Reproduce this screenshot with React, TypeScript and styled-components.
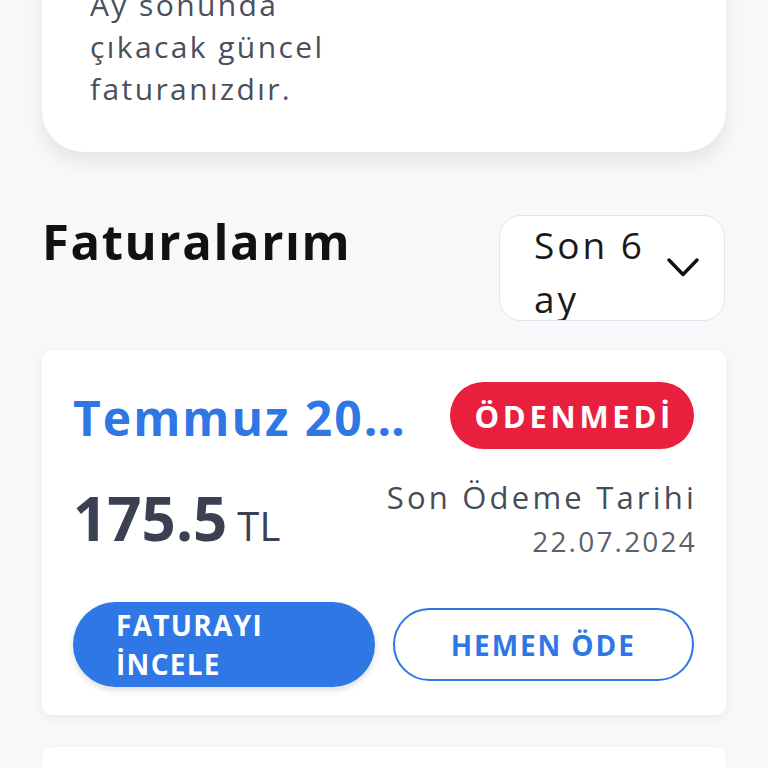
import React from "react";
import styled, { createGlobalStyle } from "styled-components";

const Global = createGlobalStyle`
  html, body { margin: 0; padding: 0; background: #f7f8fa; }
  body { font-family: "Open Sans", "Noto Sans", sans-serif; overflow: hidden; }
  * { box-sizing: border-box; }
`;

const Page = styled.div`
  width: 768px;
  height: 768px;
  overflow: hidden;
  padding: 0 42px;
  background: #f7f8fa;
`;

const InfoCard = styled.div`
  margin-top: -60px;
  background: #fff;
  border-radius: 0 0 42px 42px;
  box-shadow: 0 10px 18px rgba(0, 0, 0, 0.08);
  padding: 44px 48px 42px 48px;
`;

const InfoText = styled.p`
  margin: 0;
  width: 255px;
  font-size: 30px;
  line-height: 42px;
  color: #4a4f5c;
  letter-spacing: 2.4px;
`;

const HeaderRow = styled.div`
  margin-top: 63px;
  display: flex;
  justify-content: space-between;
  align-items: flex-start;
`;

const Title = styled.h1`
  margin: 0;
  font-size: 49px;
  line-height: 52px;
  font-weight: 700;
  color: #111;
  letter-spacing: 1.6px;
`;

const Select = styled.div`
  width: 226px;
  height: 106px;
  border: 1.5px solid #e1e3e8;
  border-radius: 22px;
  background: #fff;
  display: flex;
  align-items: flex-start;
  justify-content: space-between;
  padding: 2px 25px 0 34px;
  overflow: hidden;
  margin-right: 1px;
`;

const SelectText = styled.span`
  width: 122px;
  font-size: 37px;
  line-height: 54px;
  color: #1a1a1a;
  letter-spacing: 3px;
`;

const Chevron = styled.svg`
  margin-top: 40px;
`;

const BillCard = styled.div`
  margin-top: 29px;
  background: #fff;
  border-radius: 10px;
  box-shadow: 0 3px 10px rgba(0, 0, 0, 0.06);
  padding: 31px 32px 28px 31px;
  display: flex;
  flex-direction: column;
`;

const TitleRow = styled.div`
  display: flex;
  align-items: center;
  justify-content: space-between;
`;

const Month = styled.div`
  width: 348px;
  padding-top: 4px;
  font-size: 48px;
  font-weight: 700;
  color: #2f77e4;
  white-space: nowrap;
  overflow: hidden;
  text-overflow: ellipsis;
  letter-spacing: 2px;
`;

const Badge = styled.div`
  height: 67px;
  padding: 0 20px 0 24px;
  border-radius: 34px;
  background: #e8203d;
  color: #fff;
  font-size: 31px;
  font-weight: 700;
  letter-spacing: 3.7px;
  display: flex;
  align-items: center;
`;

const AmountRow = styled.div`
  margin-top: 24px;
  display: flex;
  justify-content: space-between;
  align-items: flex-start;
`;

const Amount = styled.div`
  margin-top: 12px;
  display: flex;
  align-items: baseline;
  gap: 10px;
  color: #3b4152;
  line-height: 64px;
`;

const AmountValue = styled.span`
  font-size: 60px;
  font-weight: 700;
`;

const Currency = styled.span`
  font-size: 40px;
`;

const DueBlock = styled.div`
  display: flex;
  flex-direction: column;
  align-items: flex-end;
  margin-right: -3px;
`;

const DueLabel = styled.span`
  font-size: 31px;
  line-height: 47px;
  color: #474c59;
  letter-spacing: 3.2px;
`;

const DueDate = styled.span`
  font-size: 28px;
  line-height: 40px;
  color: #5b606c;
  letter-spacing: 2.2px;
`;

const ButtonRow = styled.div`
  margin-top: 41px;
  display: grid;
  grid-template-columns: 1fr 1fr;
  align-items: center;
  gap: 18px;
`;

const Button = styled.button<{ $primary?: boolean }>`
  font-family: inherit;
  font-weight: 700;
  border-radius: 45px;
  cursor: pointer;
  ${(p) =>
    p.$primary
      ? `
    height: 85px;
    background: #2f77e4;
    color: #fff;
    border: none;
    text-align: left;
    padding: 0 30px 0 43px;
    font-size: 28px;
    line-height: 39px;
    letter-spacing: 1.3px;
    box-shadow: 0 3px 6px rgba(0,0,0,0.14);
  `
      : `
    height: 73px;
    background: #fff;
    color: #2f77e4;
    border: 2px solid #2f77e4;
    font-size: 28px;
    letter-spacing: 1.9px;
  `}
`;

const NextCard = styled.div`
  margin-top: 32px;
  height: 60px;
  background: #fff;
  border-radius: 10px;
  box-shadow: 0 -1px 6px rgba(0, 0, 0, 0.03);
`;

export default function App() {
  return (
    <>
      <Global />
      <Page>
        <InfoCard>
          <InfoText>Ay sonunda çıkacak güncel faturanızdır.</InfoText>
        </InfoCard>
        <HeaderRow>
          <Title>Faturalarım</Title>
          <Select>
            <SelectText>Son 6 ay</SelectText>
            <Chevron width="32" height="19" viewBox="0 0 32 19">
              <path d="M2 2 L16 16.5 L30 2" fill="none" stroke="#111" strokeWidth="3.4" strokeLinecap="round" strokeLinejoin="round" />
            </Chevron>
          </Select>
        </HeaderRow>
        <BillCard>
          <TitleRow>
            <Month>Temmuz 2024 Faturası</Month>
            <Badge>ÖDENMEDİ</Badge>
          </TitleRow>
          <AmountRow>
            <Amount>
              <AmountValue>175.5</AmountValue>
              <Currency>TL</Currency>
            </Amount>
            <DueBlock>
              <DueLabel>Son Ödeme Tarihi</DueLabel>
              <DueDate>22.07.2024</DueDate>
            </DueBlock>
          </AmountRow>
          <ButtonRow>
            <Button $primary>FATURAYI<br />İNCELE</Button>
            <Button>HEMEN ÖDE</Button>
          </ButtonRow>
        </BillCard>
        <NextCard />
      </Page>
    </>
  );
}
